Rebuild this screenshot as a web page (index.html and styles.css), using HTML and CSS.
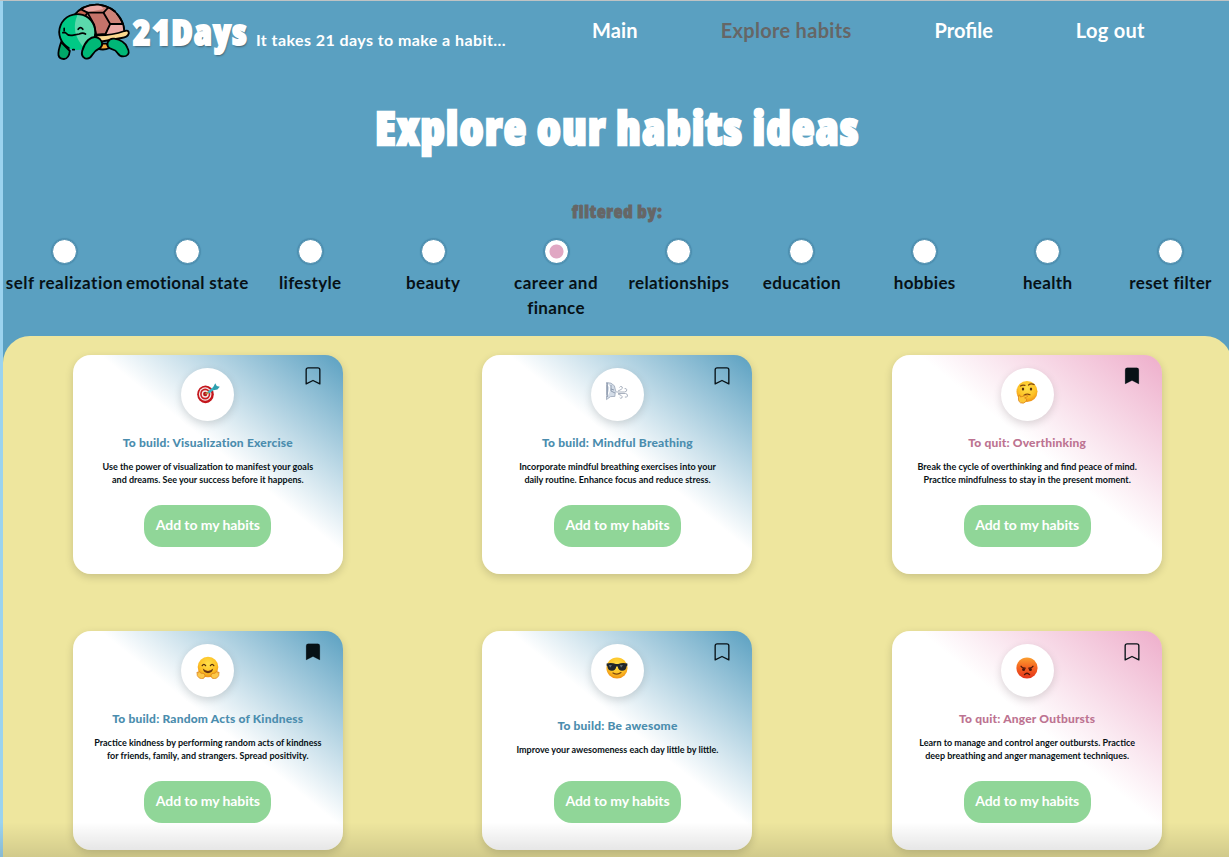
FILE: index.html
```html
<!DOCTYPE html>
<html lang="en">
<head>
<meta charset="utf-8">
<title>21Days</title>
<link rel="stylesheet" href="styles.css">
</head>
<body>
<svg class="defs" aria-hidden="true">
  <defs>
    <radialGradient id="yellow" cx=".5" cy=".35" r=".65"><stop offset="0" stop-color="#ffe04a"/><stop offset=".65" stop-color="#fdc125"/><stop offset="1" stop-color="#ee9016"/></radialGradient>
    <linearGradient id="red" x1="0" y1="0" x2="0" y2="1"><stop offset="0" stop-color="#fba030"/><stop offset=".5" stop-color="#f4601f"/><stop offset="1" stop-color="#e2331b"/></linearGradient>
    <symbol id="mark" viewBox="0 0 16 20"><path d="M.8 17.8V3Q.8.9 2.9.9h10.2q2.1 0 2.1 2.1v14.8L8 14.2z" stroke-linejoin="round"/></symbol>
    <symbol id="dart" viewBox="0 0 24 24"><ellipse cx="9.5" cy="13.3" rx="8.3" ry="8.9" fill="#c4161c"/><ellipse cx="9.2" cy="13" rx="6.3" ry="6.8" fill="#f3e9e7"/><ellipse cx="9.2" cy="13" rx="5.1" ry="5.5" fill="#cb1d22"/><ellipse cx="9.2" cy="13" rx="3.5" ry="3.8" fill="#f3e9e7"/><ellipse cx="9.2" cy="13" rx="2.1" ry="2.3" fill="#b5161b"/><path d="M9.5 13l4-2.2" stroke="#b08a3c" stroke-width="1.5"/><path d="M12.500 11.500l6.200-5" stroke="#36b5c4" stroke-width="2.600"/><path d="M17 6.800l2.200-4.600 1.600 2.800 3 .8-2.400 2.800-4 .6z" fill="#2e9fae"/></symbol>
    <symbol id="breath" viewBox="0 0 24 24"><path d="M1.500 2.500L6 3.200l3.400 2.600 1 4.200 1 2.200-1.300 1.200-.2 3-4.400.2-4 3z" fill="#d3dce7" stroke="#9aa6b8" stroke-width=".8"/><path d="M2 4l3 3-1 5-2 4" fill="none" stroke="#fff" stroke-width="1.200"/><path d="M6 5v6l4 2M6 9l3 1M2.400 3v14" fill="none" stroke="#8794a8" stroke-width=".9"/><g fill="none" stroke="#aab2bf" stroke-width="1"><path d="M12 12h7.500q2.500-.3 2.300-2.200-.3-1.600-2.200-1.200M13 11l3-1.500q2.500-1.300 1-2.700-1.800-1-2.500.7M13 13.500h7.500q2.300.4 2 2.500-.6 1.800-2.600 1M13 14l3 1.300q1.900 1.300.8 2.700-1.400.8-2.100-.6"/></g></symbol>
    <symbol id="think" viewBox="0 0 24 24"><circle cx="12" cy="11.500" r="10.500" fill="url(#yellow)"/><path d="M5.500 6q2-1.500 4.500-.6M13.500 5q2.500-2.200 5.500-.4" fill="none" stroke="#80480f" stroke-width="1.200" stroke-linecap="round"/><ellipse cx="8" cy="9" rx="1.200" ry="1.600" fill="#57300d"/><ellipse cx="16" cy="9" rx="1.200" ry="1.600" fill="#57300d"/><path d="M9 15.200q3-1.800 6-.4" fill="none" stroke="#80480f" stroke-width="1.200" stroke-linecap="round"/><path d="M4 15q1.200-.3 1.600 2l6.700-2q1.500.4.3 1.500l-3 1.400q3 .6 1.600 3.300-2.200 3-5.700 1.600Q2.300 21 4 15z" fill="#fdc736" stroke="#d9831a" stroke-width=".8"/></symbol>
    <symbol id="hug" viewBox="0 0 24 24"><circle cx="12" cy="11" r="10.300" fill="url(#yellow)"/><path d="M6.200 9.600q1.700-2.600 3.400 0M14.400 9.600q1.700-2.600 3.400 0" fill="none" stroke="#57300d" stroke-width="1.300" stroke-linecap="round"/><path d="M6.800 12.600q5.200 4.800 10.400 0-1 4.600-5.200 4.600t-5.200-4.600z" fill="#6b3510"/><path d="M1 16l1.600.8.2-1.600 2.200 2 3 .3q2.200 2.300-.2 4.700-4.700 1.300-6.500-2.600zM23 16l-1.600.8-.2-1.600-2.200 2-3 .3q-2.200 2.300.2 4.700 4.700 1.300 6.500-2.600z" fill="#fdc94a" stroke="#dd861c" stroke-width=".8"/></symbol>
    <symbol id="cool" viewBox="0 0 24 24"><circle cx="12" cy="12" r="10.600" fill="url(#yellow)"/><path d="M1.600 7.500q5-1 9.200.4h2.400q4.200-1.400 9.200-.4v2l-.8.700q-.5 4.500-4.600 4.500-3.500 0-4.300-4.300h-1.400q-.8 4.300-4.300 4.300-4.100 0-4.600-4.500l-.8-.7z" fill="#20262b"/><path d="M4 9l3 .2-2 2.500zM15 9l3 .2-2 2.500z" fill="#66727c"/><path d="M8 17q4.400 2.600 8-.4" fill="none" stroke="#80480f" stroke-width="1.300" stroke-linecap="round"/></symbol>
    <symbol id="angry" viewBox="0 0 24 24"><circle cx="12" cy="12" r="10.600" fill="url(#red)"/><path d="M6 10.200q1 1.800 4.200 2M18 10.200q-1 1.800-4.200 2" fill="none" stroke="#4b160b" stroke-width="1.300" stroke-linecap="round"/><circle cx="8.600" cy="13.500" r="1.500" fill="#4b160b"/><circle cx="15.400" cy="13.500" r="1.500" fill="#4b160b"/><path d="M9.500 18.600q2.500-2.800 5 0" fill="none" stroke="#4b160b" stroke-width="1.400" stroke-linecap="round"/></symbol>
  </defs>
</svg>
<div class="page">
  <header class="top">
    <div class="brand">
      <svg class="turtle" viewBox="15 6 230 180" fill="none" stroke="#000" stroke-width="5.500" stroke-linecap="round" stroke-linejoin="round">
        <path d="M70 48Q98 12 144 14q42 4 63 36 15 22 15 46-40 14-87 10z" fill="#ce8378"/>
        <path d="M80 42Q105 12 150 15l10 12-48 10-20 10z" fill="#eca9a5" stroke="none"/>
        <path d="M80 42l14-14 18 9-8 13z" fill="#c8654f" stroke="none"/>
        <path d="M180 72h39q3 12 3 23-22 7-52 7z" fill="#eca9a5" stroke="none"/>
        <path d="M112 38h48l20 34-14 30-28 2-6-30z" fill="#c4736a"/>
        <path d="M93 28l19 10-9 13M160 38l13-14M180 72h38"/>
        <path d="M70 48Q98 12 144 14q28 3 50 20M201 42q21 24 21 50"/>
        <path d="M136 106q45 2 87-13 13-4 13 7-3 12-22 14l-68 12z" fill="#fbd990"/>
        <path d="M143 146q18 6 35-2l-8-13h-20z" fill="#f6a83c"/>
        <path d="M33 126q-10 28-8 40 3 12 17 11 14-1 17-24z" fill="#00a868"/>
        <path d="M192 116q30 5 39 26 11 20-4 26-16 5-25-9-5-9-15-11-20-5-14-22 6-12 19-10z" fill="#00b877"/>
        <circle cx="80" cy="96" r="54" fill="#00c985" stroke="none"/>
        <path d="M83 43a53 53 0 0 1 19 101Q58 96 83 43z" fill="#5bd9ac" stroke="none"/>
        <path d="M56 144A54 54 0 1 1 134 108M68 149h4"/>
        <path d="M42 85v7M84 88q7-10 14 0M38 98h8q8 10 20 8l21-4q11-5 19 0" stroke-width="5"/>
        <path d="M149 117q13 14 2 26-16 8-25 22-8 14-21 10-13-6-9-22 5-20 18-33 19-16 35-3z" fill="#00b877"/>
      </svg>
      <span class="logo">21Days</span>
      <span class="tagline">It takes 21 days to make a habit...</span>
    </div>
    <nav class="nav">
      <a>Main</a><a class="current">Explore habits</a><a class="tight">Profile</a><a class="wide">Log out</a>
    </nav>
  </header>
  <h1>Explore our habits ideas</h1>
  <h2>filtered by:</h2>
  <ul class="filters">
    <li class="wide"><i></i>self realization</li>
    <li><i></i>emotional state</li>
    <li><i></i>lifestyle</li>
    <li><i></i>beauty</li>
    <li class="on"><i></i><span class="wide">career and</span><br>finance</li>
    <li><i></i>relationships</li>
    <li><i></i>education</li>
    <li><i></i>hobbies</li>
    <li><i></i>health</li>
    <li><i></i>reset filter</li>
  </ul>
  <main class="cards">
    <article class="card">
      <svg class="mark"><use href="#mark"/></svg>
      <div class="face"><svg><use href="#dart"/></svg></div>
      <div class="text"><h3>To build: Visualization Exercise</h3><p>Use the power of visualization to manifest your goals<br>and dreams. See your success before it happens.</p></div>
      <button>Add to my habits</button>
    </article>
    <article class="card">
      <svg class="mark"><use href="#mark"/></svg>
      <div class="face"><svg class="up"><use href="#breath"/></svg></div>
      <div class="text"><h3>To build: Mindful Breathing</h3><p>Incorporate mindful breathing exercises into your<br>daily routine. Enhance focus and reduce stress.</p></div>
      <button>Add to my habits</button>
    </article>
    <article class="card quit">
      <svg class="mark saved"><use href="#mark"/></svg>
      <div class="face"><svg class="up"><use href="#think"/></svg></div>
      <div class="text"><h3>To quit: Overthinking</h3><p>Break the cycle of overthinking and find peace of mind.<br>Practice mindfulness to stay in the present moment.</p></div>
      <button>Add to my habits</button>
    </article>
    <article class="card">
      <svg class="mark saved"><use href="#mark"/></svg>
      <div class="face"><svg class="up"><use href="#hug"/></svg></div>
      <div class="text"><h3>To build: Random Acts of Kindness</h3><p>Practice kindness by performing random acts of kindness<br>for friends, family, and strangers. Spread positivity.</p></div>
      <button>Add to my habits</button>
    </article>
    <article class="card">
      <svg class="mark"><use href="#mark"/></svg>
      <div class="face"><svg class="up"><use href="#cool"/></svg></div>
      <div class="text"><h3>To build: Be awesome</h3><p>Improve your awesomeness each day little by little.</p></div>
      <button>Add to my habits</button>
    </article>
    <article class="card quit">
      <svg class="mark"><use href="#mark"/></svg>
      <div class="face"><svg class="up"><use href="#angry"/></svg></div>
      <div class="text"><h3>To quit: Anger Outbursts</h3><p>Learn to manage and control anger outbursts. Practice<br>deep breathing and anger management techniques.</p></div>
      <button>Add to my habits</button>
    </article>
  </main>
</div>
<div class="shade"></div>
</body>
</html>
```

FILE: styles.css
```css
* { box-sizing: border-box; margin: 0; padding: 0; }
html, body { height: 857px; overflow: hidden; }
body {
  font-family: Lato, "Liberation Sans", sans-serif;
  font-weight: 700;
  color: #071116;
  background: #9bd3ef;
  border-top: 1px solid #bfc3c4;
}
.defs { position: absolute; width: 0; height: 0; }
.page { width: 1229px; height: 856px; margin-left: 3px; background: #5aa0c1; }

.top { display: flex; height: 76px; color: #fff; }
.brand { display: flex; align-items: flex-start; width: 589px; padding: 1px 0 0 52px; }
.turtle { width: 77px; height: 60px; flex: none; }
.logo {
  font-family: "Open Sans", sans-serif;
  font-stretch: 75%;
  font-weight: 800;
  font-size: 36px;
  line-height: 40px;
  letter-spacing: 1.4px;
  padding: 10px 0 0 1px;
  -webkit-text-stroke: 2px #fff;
  text-shadow: 1px 2px 2px #44606e;
}
.tagline { font-size: 16px; line-height: 20px; letter-spacing: .42px; margin: 28px 0 0 8px; white-space: nowrap; }
.nav { display: flex; gap: 83px; padding-top: 16px; font-size: 20px; line-height: 26px; letter-spacing: .15px; white-space: nowrap; }
.nav .current { color: #666; letter-spacing: .3px; }
.nav .tight { letter-spacing: 0; }
.nav .wide { letter-spacing: .3px; }

h1, h2 { font-family: "Open Sans", sans-serif; font-stretch: 75%; font-weight: 800; text-align: center; }
h1 {
  font-size: 46px;
  line-height: 60px;
  height: 60px;
  margin-top: 20px;
  letter-spacing: 1.5px;
  color: #fff;
  -webkit-text-stroke: 2.5px #fff;
}
h2 {
  font-size: 18px;
  line-height: 24px;
  margin-top: 42px;
  letter-spacing: .75px;
  color: #666;
  -webkit-text-stroke: .9px #666;
}

.filters { display: grid; grid-template-columns: repeat(10, 1fr); height: 113px; padding-top: 16px; list-style: none; }
.filters li { text-align: center; font-size: 17px; line-height: 25px; letter-spacing: .33px; white-space: nowrap; }
.filters .wide { letter-spacing: .5px; }
.filters i {
  display: block;
  width: 25px;
  height: 25px;
  margin: 0 auto 6px;
  border: 1px solid #4b8dae;
  border-radius: 50%;
  background: #fff;
  box-shadow: 0 0 1px 1px #4b8dae;
}
.filters .on i { background: radial-gradient(circle, #e0a7c3 0 6.6px, #fff 7.4px); }

.cards {
  display: grid;
  grid-template-columns: repeat(3, 1fr);
  grid-auto-rows: 219.3px;
  row-gap: 56.9px;
  justify-items: center;
  height: 560px;
  padding-top: 19px;
  background: #eee69e;
  border-radius: 27px;
}
.card {
  position: relative;
  display: flex;
  flex-direction: column;
  align-items: center;
  width: 270px;
  padding: 13px 0 27px;
  border-radius: 18px;
  background: linear-gradient(to top right, #fff 55%, #5aa0c1);
  box-shadow: 0 3px 9px rgba(0, 0, 0, .16);
}
.quit { background: linear-gradient(to top right, #fff 55%, #eeaecb); }
.mark { position: absolute; top: 12px; right: 22px; width: 16px; height: 19px; fill: none; stroke: #071116; stroke-width: 1.4; }
.saved { fill: #071116; stroke-width: .2; }
.face {
  display: grid;
  place-items: center;
  width: 53px;
  height: 53px;
  flex: none;
  border-radius: 50%;
  background: #fff;
  box-shadow: 0 3px 8px rgba(0, 0, 0, .14);
}
.face svg { width: 24px; height: 24px; margin-bottom: 3px; }
.face .up { margin-bottom: 6px; }
.text {
  display: flex;
  flex: 1;
  flex-direction: column;
  justify-content: center;
  gap: 11px;
  padding-bottom: 5px;
  text-align: center;
  white-space: nowrap;
}
h3 { font-size: 12px; line-height: 15px; letter-spacing: .19px; color: #4b8dae; font-weight: 900; }
.quit h3 { color: #bd7391; }
.text p { font-size: 9px; line-height: 12.6px; }
button {
  flex: none;
  width: 127px;
  height: 42px;
  border: 0;
  border-radius: 18px;
  background: #90d698;
  color: #fff;
  font: 700 14px/20px Lato, sans-serif;
  letter-spacing: -.08px;
  padding-bottom: 2px;
}
.shade { position: absolute; left: 0; right: 0; top: 822px; height: 35px; background: linear-gradient(transparent, rgba(0, 0, 0, .12)); }
```
